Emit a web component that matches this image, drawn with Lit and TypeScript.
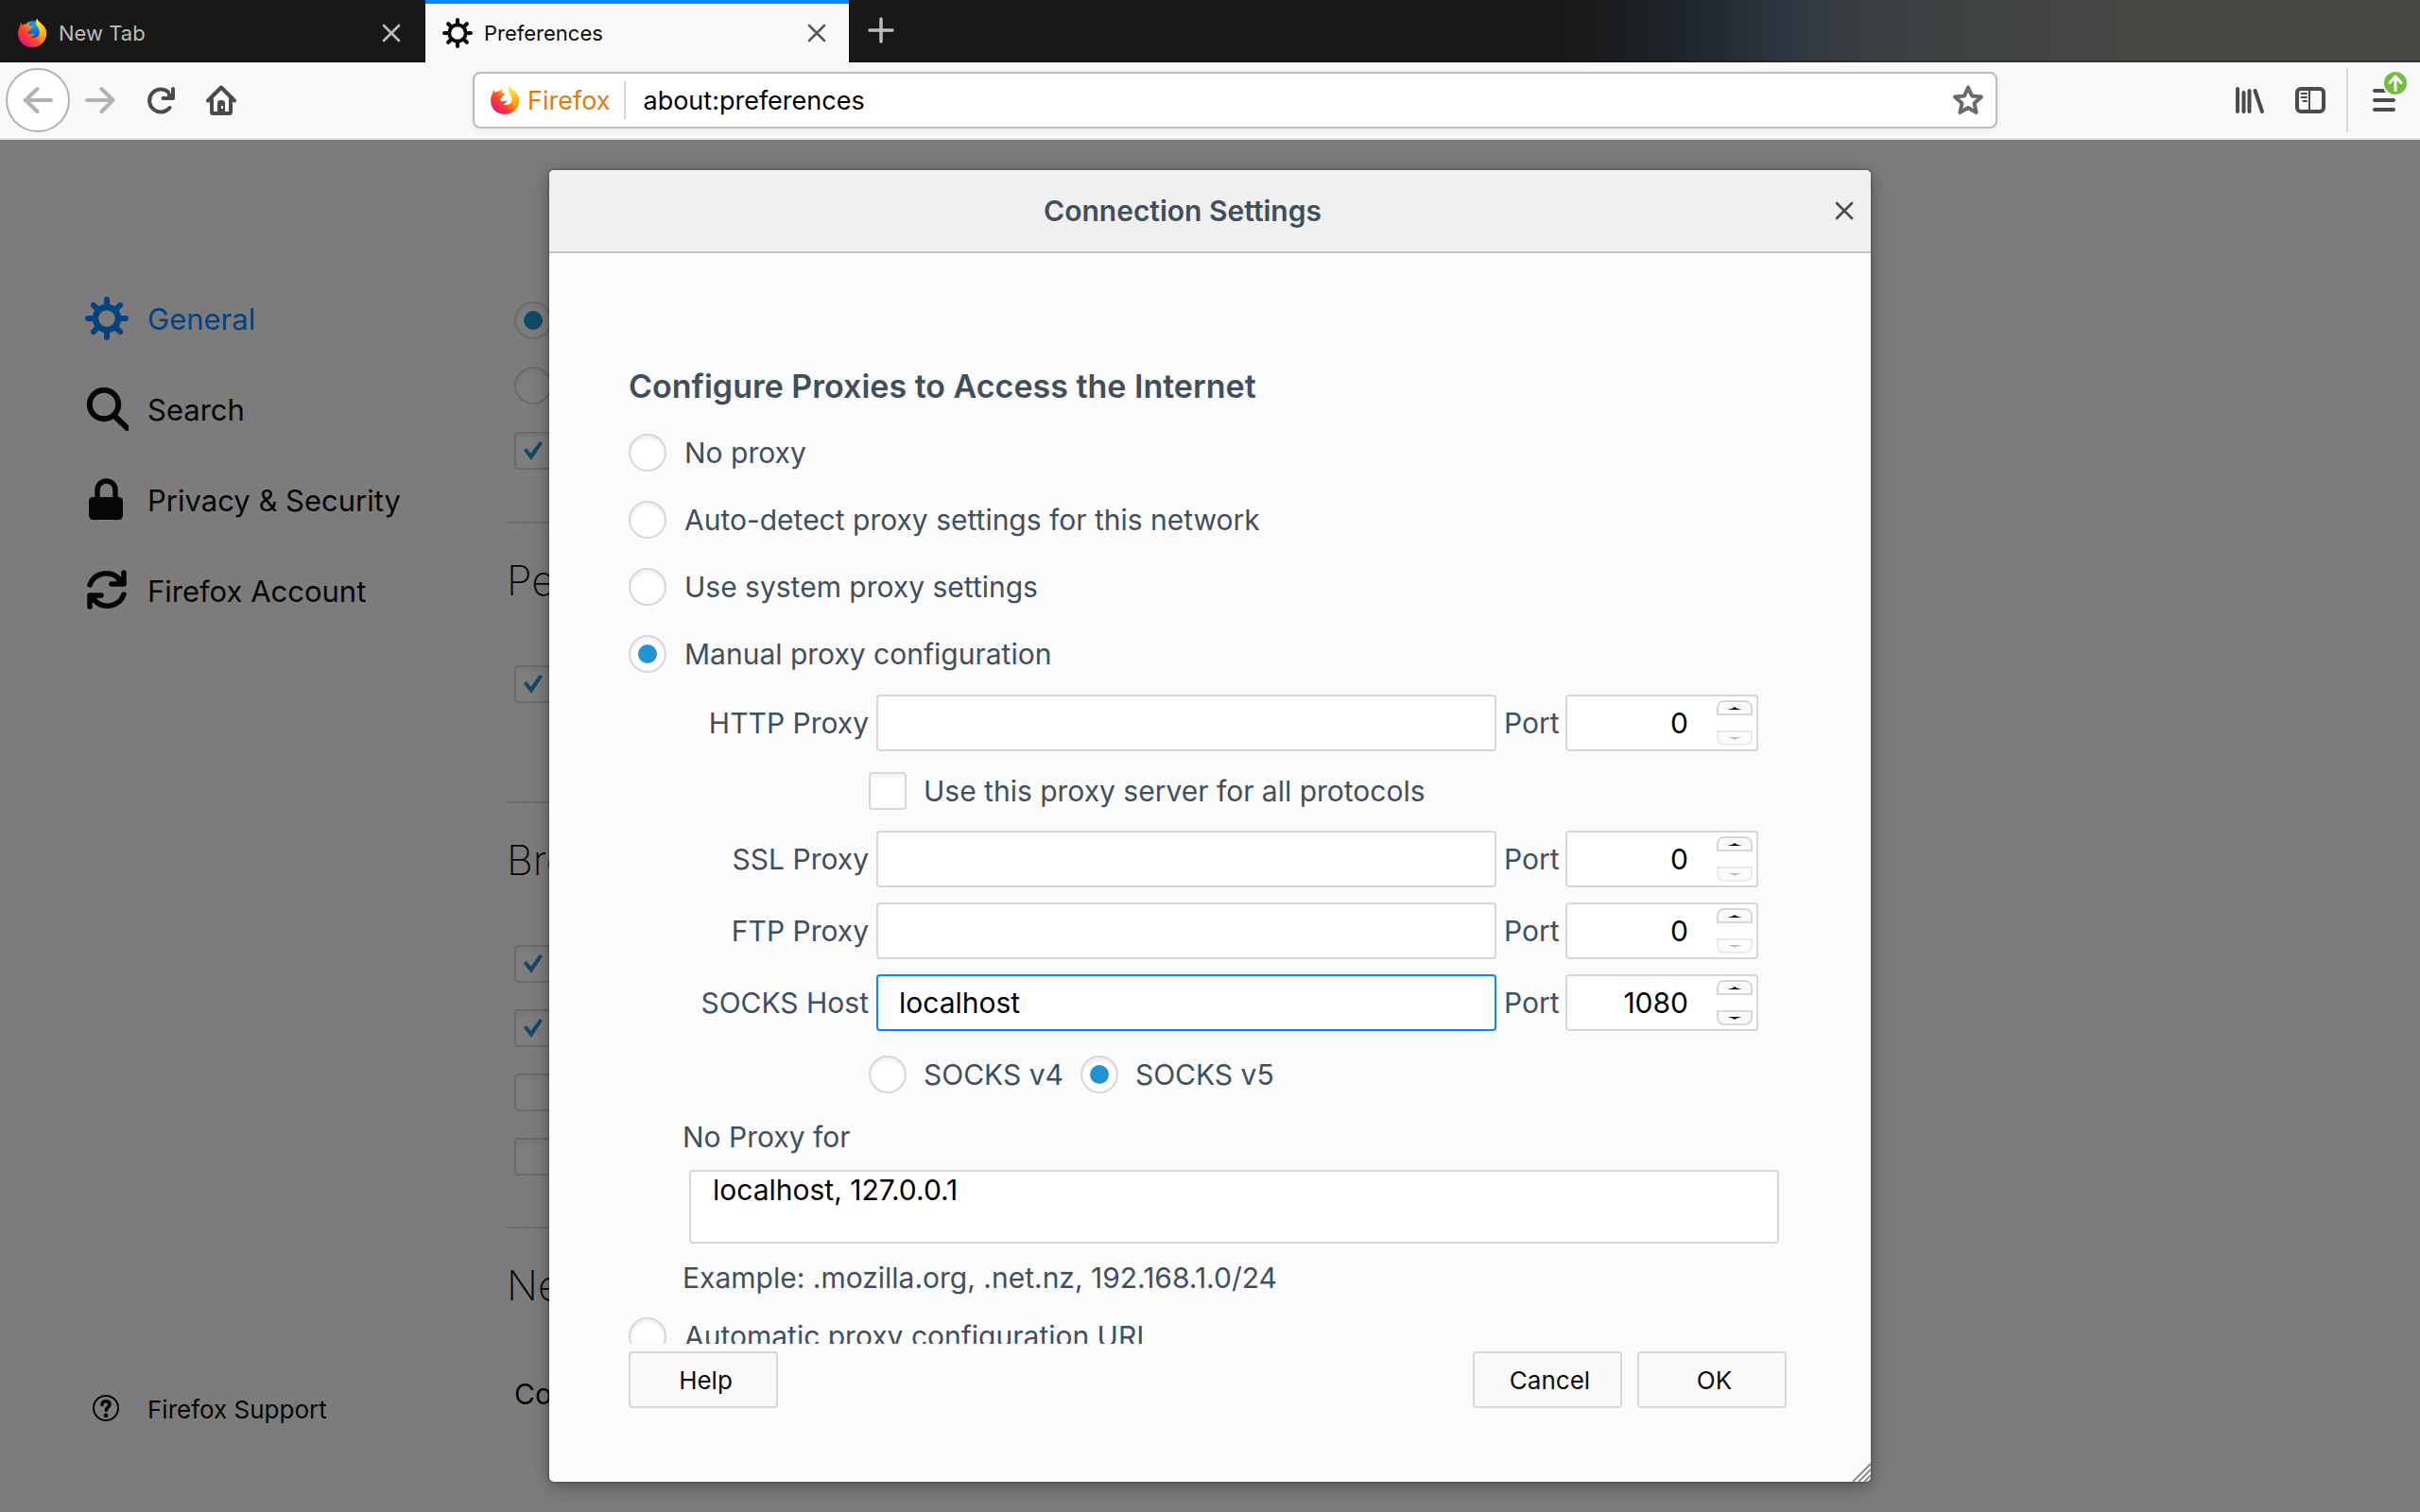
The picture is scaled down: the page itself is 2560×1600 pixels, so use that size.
import { LitElement, html, svg, css, nothing } from "lit";
import { customElement, state } from "lit/decorators.js";
import { classMap } from "lit/directives/class-map.js";

const SPOKES = [0, 45, 90, 135, 180, 225, 270, 315];

const gearIcon = (size: number, radius: number, ring: number) => html`
  <svg width=${size} height=${size} viewBox="0 0 46 46" fill="none" stroke="currentColor" aria-hidden="true">
    <circle cx="23" cy="23" r=${radius} stroke-width=${ring} />
    ${SPOKES.map(
      (a) => svg`<path d="M23 10V3" stroke-width="6" stroke-linecap="round" transform="rotate(${a} 23 23)" />`
    )}
  </svg>
`;

const searchIcon = html`
  <svg width="46" height="46" viewBox="0 0 46 46" fill="none" stroke="currentColor" stroke-width="6" aria-hidden="true">
    <circle cx="20" cy="18" r="15.2" />
    <path d="M31 30L44.500 43" stroke-linecap="round" />
  </svg>
`;

const lockIcon = html`
  <svg width="46" height="46" viewBox="0 0 46 46" fill="none" aria-hidden="true">
    <path d="M13 24V12.500a9.500 9.500 0 0 1 19 0V24" stroke="currentColor" stroke-width="5.500" />
    <rect x="4" y="20" width="36" height="24" rx="4.500" fill="currentColor" />
  </svg>
`;

const syncIcon = html`
  <svg width="46" height="46" viewBox="0 0 46 46" fill="none" stroke="currentColor" stroke-width="5.500"
    stroke-linecap="round" aria-hidden="true">
    <path d="M5 17A18.500 18.500 0 0 1 37 12" />
    <path d="M41 4v12H28" stroke-linejoin="round" />
    <path d="M32 7l9 2v7h-7z" fill="currentColor" stroke="none" />
    <path d="M41 27A18.500 18.500 0 0 1 9 32" />
    <path d="M5 40V28H17" stroke-linejoin="round" />
    <path d="M14 37l-9-2v-7h7z" fill="currentColor" stroke="none" />
  </svg>
`;

const helpIcon = html`
  <svg width="46" height="32" viewBox="0 0 46 32" fill="none" stroke="currentColor" aria-hidden="true">
    <circle cx="22" cy="15" r="13" stroke-width="2" />
    <path d="M18 11.500C18.200 9 20 7.800 22 7.800C24.500 7.800 26 9.200 26 11.200C26 13.800 22.300 14 22.300 17.500" stroke-width="3.600" stroke-linecap="round" />
    <circle cx="22" cy="22.800" r="2.400" fill="currentColor" stroke="none" />
  </svg>
`;

const closeIcon = html`
  <svg width="20" height="20" viewBox="0 0 20 20" stroke="currentColor" stroke-width="2.600" stroke-linecap="round" aria-hidden="true">
    <path d="M2 2L18 18M18 2L2 18" />
  </svg>
`;

const firefoxLogo = (globe: boolean) => html`
  <svg width="32" height="32" viewBox="0 0 32 32" aria-hidden="true">
    <defs>
      <linearGradient id="flame" x1="0.900" y1="0.100" x2="0.150" y2="0.850">
        <stop offset="0" stop-color="#ffe226" />
        <stop offset="0.350" stop-color="#ffa60f" />
        <stop offset="0.650" stop-color="#ff4a28" />
        <stop offset="1" stop-color="#e8167c" />
      </linearGradient>
      <linearGradient id="tail" x1="0.300" y1="0" x2="0.500" y2="1">
        <stop offset="0" stop-color="#fff04a" />
        <stop offset="0.550" stop-color="#ffbd1c" />
        <stop offset="1" stop-color="#ff8a12" />
      </linearGradient>
      <radialGradient id="sphere" cx="0.550" cy="0.200" r="0.800">
        <stop offset="0" stop-color="#12a5f0" />
        <stop offset="0.600" stop-color="#0a5bd0" />
        <stop offset="1" stop-color="#1a2f8a" />
      </radialGradient>
    </defs>
    ${globe ? svg`<circle cx="17" cy="14.500" r="11.500" fill="url(#sphere)" />` : nothing}
    <path
      d="M4.500 4.200C4.300 6 4.800 7 5.400 7.800C7 6.600 8.800 6.300 10.600 6.600C11.400 5.300 12.600 4.600 13.800 4.300
         C12.900 5.300 12.700 6.500 12.900 7.800C13.600 8.700 15.300 8.800 16.300 9.100C16.400 10.400 15 11.200 14 12
         C13.700 12.800 13.700 13.600 13 14.100C11.800 13.900 11 14.500 11 15.500C12 17.400 14.600 17.300 16 16.700
         C17.500 16.100 18.500 16.700 18.700 17.600C17.300 17.700 17.500 19.800 14.600 20.300C17.600 22 22.600 20.800 23.600 16.200
         C24.200 12.600 22.200 9.800 20.600 7.600C19.600 5 20.400 2.300 21.300 .8C21.800 3.200 23.300 4.200 25 5.600
         C28 7.900 31.300 11.500 31 17C30.700 25 24.500 31 16.200 31C7.800 31 1.100 24.600 1.100 16.400
         C1.100 12.400 2.300 10 3.400 8.500C3.300 6.800 3.700 5.300 4.500 4.200Z"
      fill="url(#flame)"
    />
    <path
      d="M21.300 .8C21.800 3.200 23.300 4.200 25 5.600C28 7.900 31.300 11.500 31 17C30.900 19.800 30 22.400 28.500 24.600
         C26 26.500 23.500 24 24.500 20C25.400 15 22.900 11 20.600 7.600C19.600 5 20.400 2.300 21.300 .8Z"
      fill="url(#tail)"
    />
  </svg>
`;

const backIcon = html`
  <svg width="32" height="32" viewBox="0 0 32 32" fill="none" stroke="currentColor" stroke-width="4"
    stroke-linecap="round" stroke-linejoin="round" aria-hidden="true">
    <path d="M30 16H2.500M15.500 4L3 16L15.500 28" />
  </svg>
`;

const forwardIcon = html`
  <svg width="32" height="32" viewBox="0 0 32 32" fill="none" stroke="currentColor" stroke-width="4"
    stroke-linecap="round" stroke-linejoin="round" aria-hidden="true">
    <path d="M2 16H29.500M17.500 4L29.500 16L17.500 28" />
  </svg>
`;

const reloadIcon = html`
  <svg width="32" height="32" viewBox="0 0 32 32" fill="none" stroke="currentColor" stroke-width="4"
    stroke-linecap="round" aria-hidden="true">
    <path d="M25.500 24A12 12 0 1 1 24 7.500" />
    <path d="M29 4v10H18.500" stroke-linejoin="round" />
    <path d="M23 7l6 3v4h-6z" fill="currentColor" stroke="none" />
  </svg>
`;

const homeIcon = html`
  <svg width="32" height="32" viewBox="0 0 32 32" fill="none" stroke="currentColor" stroke-width="4"
    stroke-linecap="round" stroke-linejoin="round" aria-hidden="true">
    <path d="M2 16.500L16 2.500L30 16.500" />
    <path d="M6 15v13.500q0 1.500 1.500 1.500h17q1.500 0 1.500-1.500V15" />
    <path d="M12 30V19q0-3 3-3h2q3 0 3 3V30z" fill="currentColor" stroke="none" />
    <rect x="16" y="22" width="2" height="3" fill="#f9f9fa" stroke="none" />
  </svg>
`;

const starIcon = html`
  <svg width="34" height="34" viewBox="0 0 34 34" fill="none" stroke="currentColor" stroke-width="4"
    stroke-linejoin="round" aria-hidden="true">
    <path d="M17 3.500L21 12.500L31 13.600L23.500 20.200L25.600 30L17 25L8.400 30L10.500 20.200L3 13.600L13 12.500Z" />
  </svg>
`;

const libraryIcon = html`
  <svg width="32" height="32" viewBox="0 0 32 32" fill="none" stroke="currentColor" stroke-width="4"
    stroke-linecap="round" aria-hidden="true">
    <path d="M3 4V28M9.500 8V28M15.500 6V28M21.500 6L29 28" />
  </svg>
`;

const sidebarIcon = html`
  <svg width="32" height="32" viewBox="0 0 32 32" fill="none" stroke="currentColor" aria-hidden="true">
    <rect x="2" y="4" width="28" height="24" rx="4" stroke-width="4" />
    <path d="M15 5V27" stroke-width="2" />
    <path d="M6.500 9H12M6.500 13H12M8.500 17H12" stroke-width="2" stroke-linecap="round" />
  </svg>
`;

const menuIcon = html`
  <svg width="24" height="28" viewBox="0 0 24 28" fill="none" stroke="currentColor" stroke-width="4"
    stroke-linecap="round" aria-hidden="true">
    <path d="M2 4H22M2 14H22M2 24H22" />
  </svg>
`;

const badgeIcon = html`
  <svg width="28" height="28" viewBox="0 0 28 28" aria-hidden="true">
    <circle cx="14" cy="14" r="14" fill="#f9f9fa" />
    <circle cx="14" cy="14" r="12" fill="#70bf41" />
    <path d="M14 21.500V7.500M8 13.500L14 7L20 13.500" fill="none" stroke="#fff" stroke-width="3"
      stroke-linecap="round" stroke-linejoin="round" />
  </svg>
`;

interface ProxyRow {
  id: string;
  label: string;
  host: string;
  port: number;
  active?: boolean;
}

const MODES = [
  "No proxy",
  "Auto-detect proxy settings for this network",
  "Use system proxy settings",
  "Manual proxy configuration",
];

const HTTP_ROW: ProxyRow = { id: "http", label: "HTTP Proxy", host: "", port: 0 };
const OTHER_ROWS: ProxyRow[] = [
  { id: "ssl", label: "SSL Proxy", host: "", port: 0 },
  { id: "ftp", label: "FTP Proxy", host: "", port: 0 },
  { id: "socks", label: "SOCKS Host", host: "localhost", port: 1080, active: true },
];

@customElement("app-root")
export class AppRoot extends LitElement {
  @state() private mode = 3;
  @state() private socks = 5;

  static styles = css`
    :host {
      display: block;
      font-family: Inter, "Liberation Sans", sans-serif;
      color: #0c0c0d;
    }
    * {
      box-sizing: border-box;
    }
    button,
    input,
    textarea {
      font: inherit;
      color: inherit;
      margin: 0;
    }
    svg {
      display: block;
      flex: none;
    }
    h1,
    h2 {
      margin: 0;
    }
    a {
      color: inherit;
      text-decoration: none;
    }
    .window {
      display: flex;
      flex-direction: column;
      height: 100vh;
      overflow: hidden;
    }

    /* tab strip */
    .tabs {
      display: flex;
      height: 66px;
      flex: none;
      background: linear-gradient(90deg, #181818 64%, #1b1d20 67%, #222a33 71%, #2e3741 74%, #3a3e42 77%, #3f4342 82%, #484744 89%, #484743);
      box-shadow: inset 0 -2px 0 rgba(0, 0, 0, 0.25);
      font-size: 22px;
      color: #bebebe;
    }
    .tab {
      display: flex;
      align-items: center;
      width: 450px;
      padding: 4px 26px 0 18px;
    }
    .tab.selected {
      width: 448px;
      background: #f9f9fa;
      color: #0c0c0d;
      border-top: 4px solid #0a84ff;
      padding: 0 24px 0 18px;
    }
    .tab-title {
      flex: 1;
      margin-left: 12px;
    }
    .plain {
      display: flex;
      align-items: center;
      justify-content: center;
      padding: 0;
      border: 0;
      background: none;
    }
    .tab.selected .plain {
      color: #5a5a5b;
    }
    .new-tab {
      width: 68px;
      padding-bottom: 2px;
    }

    /* toolbar */
    .toolbar {
      display: flex;
      align-items: center;
      flex: none;
      height: 82px;
      padding: 0 6px;
      background: #f9f9fa;
      border-bottom: 2px solid #e0e0e1;
      color: #4a4a4b;
    }
    .tool {
      width: 64px;
      height: 68px;
    }
    .tool.dim {
      color: #b2b2b3;
    }
    .tool.back {
      width: 68px;
      border: 2px solid #b2b2b3;
      border-radius: 50%;
      background: #fff;
    }
    .url {
      display: flex;
      align-items: center;
      flex: 1;
      height: 60px;
      margin: 0 235px 0 234px;
      padding: 0 12px 0 16px;
      border: 2px solid #bcbcbc;
      border-radius: 8px;
      background: #fff;
      box-shadow: 0 2px 8px rgba(0, 0, 0, 0.06);
      font-size: 27px;
    }
    .identity {
      display: flex;
      align-items: center;
      height: 42px;
      gap: 8px;
      padding-right: 15px;
      border-right: 2px solid #d7d7db;
      color: #e6780b;
    }
    .address {
      flex: 1;
      min-width: 0;
      border: 0;
      outline: 0;
      padding: 0 0 0 18px;
      background: none;
      color: #000;
    }
    .star {
      color: #6a6a6b;
    }
    .menu-slot {
      display: flex;
      margin-left: 6px;
      height: 68px;
      border-left: 2px solid #d9d9da;
    }
    .menu {
      position: relative;
      width: 70px;
      padding-left: 6px;
    }
    .badge {
      position: absolute;
      top: 2px;
      right: 6px;
    }

    /* preferences page */
    .page {
      position: relative;
      display: grid;
      grid-template-columns: 536px minmax(0, 1328px);
      flex: 1;
      min-height: 0;
      background: #f9f9fa;
      overflow: hidden;
    }
    .categories {
      display: flex;
      flex-direction: column;
      padding: 141px 0 61px 90px;
      font-size: 31px;
    }
    .category {
      display: flex;
      align-items: center;
      gap: 20px;
      height: 96px;
    }
    .category.selected {
      color: #0a84ff;
    }
    .support {
      margin-top: auto;
      font-size: 26px;
    }
    .prefs {
      padding-top: 171px;
    }
    .choices {
      display: flex;
      flex-direction: column;
      gap: 28px;
      padding-left: 8px;
    }
    .first {
      gap: 29px;
      padding-bottom: 55px;
    }
    .section {
      border-top: 2px solid #d7d7db;
      padding: 32px 0 54px;
    }
    .section.tall {
      padding-bottom: 104px;
    }
    .section h2 {
      font-size: 43px;
      font-weight: 200;
      line-height: 56px;
      margin-bottom: 62px;
    }
    .note {
      padding-left: 8px;
      font-size: 30px;
      line-height: 50px;
    }

    /* radio and tick boxes */
    .radio,
    .check {
      appearance: none;
      display: grid;
      place-items: center;
      flex: none;
      width: 40px;
      height: 40px;
      border: 2px solid #d7d7db;
      border-radius: 4px;
      background: #fff;
      box-shadow: inset 0 4px 2px #f3f3f5, 0 2px 2px #fff;
    }
    .prefs .radio,
    .prefs .check {
      background: #fbfbfb;
      box-shadow: inset 0 4px 2px #f3f3f5;
    }
    .radio,
    .prefs .radio {
      border-radius: 50%;
    }
    .radio:checked::before {
      content: "";
      width: 20px;
      height: 20px;
      border-radius: 50%;
      background: #2292d0;
    }
    .check:checked::before {
      content: "";
      width: 20px;
      height: 20px;
      background: #2292d0;
      clip-path: polygon(0 48%, 14% 36%, 38% 64%, 84% 0, 100% 10%, 40% 100%);
    }

    /* dialog */
    .overlay {
      position: absolute;
      inset: 0;
      display: flex;
      align-items: center;
      justify-content: center;
      background: rgba(0, 0, 0, 0.5);
    }
    .dialog {
      position: relative;
      display: flex;
      flex-direction: column;
      width: 1398px;
      max-width: 96%;
      height: calc(100% - 64px);
      border-radius: 5px;
      background: #fbfbfc;
      box-shadow: 0 0 0 2px rgba(0, 0, 0, 0.1), 0 4px 20px rgba(0, 0, 0, 0.35);
      color: #424f5a;
      font-size: 30px;
      overflow: hidden;
    }
    .dialog-head {
      display: flex;
      align-items: center;
      flex: none;
      height: 88px;
      padding-right: 18px;
      background: #f0f0f0;
      border-bottom: 2px solid #c1c1c1;
    }
    .dialog-head h1 {
      flex: 1;
      padding-right: 20px;
      text-align: center;
      font-size: 30px;
      font-weight: 600;
    }
    .dialog-head .plain {
      width: 20px;
      height: 40px;
    }
    .dialog-body {
      display: flex;
      flex-direction: column;
      flex: 1;
      min-height: 0;
      padding: 117px 89px 78px 84px;
    }
    .scroll {
      flex: 1;
      min-height: 0;
      overflow: hidden;
    }
    .scroll h2 {
      font-size: 34px;
      font-weight: 600;
      line-height: 48px;
      margin-bottom: 10px;
    }
    .mode {
      display: flex;
      align-items: center;
      gap: 19px;
      height: 71px;
    }
    .proxies {
      display: flex;
      flex-direction: column;
      gap: 16px;
      padding: 8px 30px 0 0;
    }
    .row {
      display: grid;
      grid-template-columns: 254px minmax(0, 1fr) 57px 204px;
      gap: 8px;
      align-items: center;
    }
    .row > label {
      text-align: right;
      white-space: nowrap;
    }
    .field,
    .number,
    .bypass {
      border: 2px solid #d7d7db;
      border-radius: 4px;
      background: #fff;
      color: #000;
      outline: 0;
    }
    .field {
      width: 100%;
      height: 60px;
      padding: 0 22px;
    }
    .field.active {
      border-color: #0a84ff;
    }
    .number {
      display: flex;
      height: 60px;
      padding: 4px;
    }
    .number input {
      flex: 1;
      min-width: 0;
      border: 0;
      outline: 0;
      padding: 0 30px 0 0;
      background: none;
      text-align: right;
      appearance: textfield;
    }
    .number input::-webkit-inner-spin-button {
      appearance: none;
      margin: 0;
    }
    .steps {
      display: flex;
      flex-direction: column;
      justify-content: space-between;
    }
    .step {
      display: grid;
      place-items: center;
      width: 38px;
      height: 16px;
      padding: 0;
      border: 2px solid #d7d7db;
      background: #fafafa;
      color: #000;
    }
    .step.up {
      border-radius: 8px 8px 0 0;
    }
    .step.down {
      border-radius: 0 0 8px 8px;
    }
    .step:disabled {
      opacity: 0.5;
      color: #777;
    }
    .share {
      display: flex;
      align-items: center;
      gap: 18px;
      height: 52px;
      padding-left: 254px;
    }
    .versions {
      display: flex;
      align-items: center;
      height: 92px;
      padding-left: 254px;
      gap: 18px;
    }
    .indent {
      display: block;
      padding-left: 57px;
      line-height: 40px;
    }
    .bypass {
      display: block;
      width: calc(100% - 72px);
      height: 78px;
      margin: 15px 8px 16px 64px;
      padding: 1px 23px;
      line-height: 36px;
      resize: none;
      overflow: hidden;
    }
    .auto {
      margin-top: 6px;
    }
    .buttons {
      display: flex;
      gap: 16px;
      padding-top: 8px;
    }
    .button {
      width: 158px;
      height: 60px;
      padding: 0 0 0 5px;
      border: 2px solid #d7d7db;
      border-radius: 4px;
      background: #f9f9fa;
      color: #0c0c0d;
      font-size: 26px;
    }
    .button.help {
      margin-right: auto;
    }
    .grip {
      position: absolute;
      right: 0;
      bottom: 0;
    }
  `;

  private portBox(row: ProxyRow) {
    return html`
      <label for="${row.id}-port">Port</label>
      <div class="number">
        <input id="${row.id}-port" type="number" min="0" max="65535" .value=${String(row.port)} />
        <div class="steps">
          <button class="step up" aria-label="Increase">
            <svg width="16" height="3" viewBox="0 0 16 3"><path d="M0 3Q6 2 8 0Q10 2 16 3Z" fill="currentColor" /></svg>
          </button>
          <button class="step down" aria-label="Decrease" ?disabled=${row.port === 0}>
            <svg width="16" height="3" viewBox="0 0 16 3"><path d="M0 0Q6 1 8 3Q10 1 16 0Z" fill="currentColor" /></svg>
          </button>
        </div>
      </div>
    `;
  }

  private proxyRow(row: ProxyRow) {
    return html`
      <div class="row">
        <label for=${row.id}>${row.label}</label>
        <input id=${row.id} type="text" class=${classMap({ field: true, active: !!row.active })} .value=${row.host} />
        ${this.portBox(row)}
      </div>
    `;
  }

  private tick(label: string, checked: boolean) {
    return html`<input class="check" type="checkbox" aria-label=${label} .checked=${checked} />`;
  }

  private renderChrome() {
    return html`
      <div class="tabs">
        <div class="tab">
          ${firefoxLogo(true)}
          <span class="tab-title">New Tab</span>
          <button class="plain" aria-label="Close tab">${closeIcon}</button>
        </div>
        <div class="tab selected">
          ${gearIcon(32, 12.5, 5.5)}
          <span class="tab-title">Preferences</span>
          <button class="plain" aria-label="Close tab">${closeIcon}</button>
        </div>
        <button class="plain new-tab" aria-label="New tab">
          <svg width="28" height="28" viewBox="0 0 28 28" stroke="currentColor" stroke-width="3.500" stroke-linecap="round">
            <path d="M14 2V26M2 14H26" />
          </svg>
        </button>
      </div>
      <div class="toolbar">
        <button class="plain tool dim back" aria-label="Back">${backIcon}</button>
        <button class="plain tool dim" aria-label="Forward">${forwardIcon}</button>
        <button class="plain tool" aria-label="Reload">${reloadIcon}</button>
        <button class="plain tool" aria-label="Home">${homeIcon}</button>
        <div class="url">
          <div class="identity">${firefoxLogo(false)}<span>Firefox</span></div>
          <input class="address" type="text" aria-label="Address" value="about:preferences" />
          <button class="plain star" aria-label="Bookmark">${starIcon}</button>
        </div>
        <button class="plain tool" aria-label="Library">${libraryIcon}</button>
        <button class="plain tool" aria-label="Sidebars">${sidebarIcon}</button>
        <div class="menu-slot">
          <button class="plain menu" aria-label="Menu">
            ${menuIcon}
            <span class="badge">${badgeIcon}</span>
          </button>
        </div>
      </div>
    `;
  }

  private renderPage() {
    return html`
      <nav class="categories">
        <a class="category selected" href="#general">${gearIcon(46, 12, 6.5)}<span>General</span></a>
        <a class="category" href="#search">${searchIcon}<span>Search</span></a>
        <a class="category" href="#privacy">${lockIcon}<span>Privacy &amp; Security</span></a>
        <a class="category" href="#account">${syncIcon}<span>Firefox Account</span></a>
        <a class="category support" href="#support">${helpIcon}<span>Firefox Support</span></a>
      </nav>
      <div class="prefs">
        <div class="choices first">
          <input class="radio" type="radio" name="general" aria-label="First option" checked />
          <input class="radio" type="radio" name="general" aria-label="Second option" />
          ${this.tick("General option", true)}
        </div>
        <section class="section tall">
          <h2>Pe</h2>
          <div class="choices">${this.tick("Option", true)}</div>
        </section>
        <section class="section">
          <h2>Bro</h2>
          <div class="choices">
            ${[true, true, false, false].map((on, i) => this.tick(`Option ${i + 1}`, on))}
          </div>
        </section>
        <section class="section">
          <h2>Ne</h2>
          <div class="note">Co</div>
        </section>
      </div>
    `;
  }

  private renderDialog() {
    return html`
      <div class="overlay">
        <div class="dialog" role="dialog" aria-labelledby="title">
          <header class="dialog-head">
            <h1 id="title">Connection Settings</h1>
            <button class="plain" aria-label="Close">${closeIcon}</button>
          </header>
          <div class="dialog-body">
            <div class="scroll">
              <h2>Configure Proxies to Access the Internet</h2>
              ${MODES.map(
                (label, i) => html`
                  <div class="mode">
                    <input class="radio" type="radio" name="mode" id="mode-${i}" .checked=${this.mode === i}
                      @change=${() => (this.mode = i)} />
                    <label for="mode-${i}">${label}</label>
                  </div>
                `
              )}
              <div class="proxies">
                ${this.proxyRow(HTTP_ROW)}
                <div class="share">
                  <input class="check" type="checkbox" id="share" />
                  <label for="share">Use this proxy server for all protocols</label>
                </div>
                ${OTHER_ROWS.map((row) => this.proxyRow(row))}
              </div>
              <div class="versions">
                ${[4, 5].map(
                  (v) => html`
                    <input class="radio" type="radio" name="socks" id="socks-v${v}" .checked=${this.socks === v}
                      @change=${() => (this.socks = v)} />
                    <label for="socks-v${v}">SOCKS v${v}</label>
                  `
                )}
              </div>
              <label class="indent" for="bypass">No Proxy for</label>
              <textarea class="bypass" id="bypass" .value=${"localhost, 127.0.0.1"}></textarea>
              <div class="indent">Example: .mozilla.org, .net.nz, 192.168.1.0/24</div>
              <div class="mode auto">
                <input class="radio" type="radio" name="mode" id="mode-auto" .checked=${this.mode === 4}
                  @change=${() => (this.mode = 4)} />
                <label for="mode-auto">Automatic proxy configuration URL</label>
              </div>
            </div>
            <div class="buttons">
              <button class="button help">Help</button>
              <button class="button">Cancel</button>
              <button class="button">OK</button>
            </div>
          </div>
          <svg class="grip" width="20" height="20" viewBox="0 0 20 20" stroke="#8c8c8c" stroke-width="2">
            <path d="M1 20L20 1M7 20L20 7M13 20L20 13" />
          </svg>
        </div>
      </div>
    `;
  }

  render() {
    return html`
      <div class="window">
        ${this.renderChrome()}
        <main class="page">${this.renderPage()}${this.renderDialog()}</main>
      </div>
    `;
  }
}
